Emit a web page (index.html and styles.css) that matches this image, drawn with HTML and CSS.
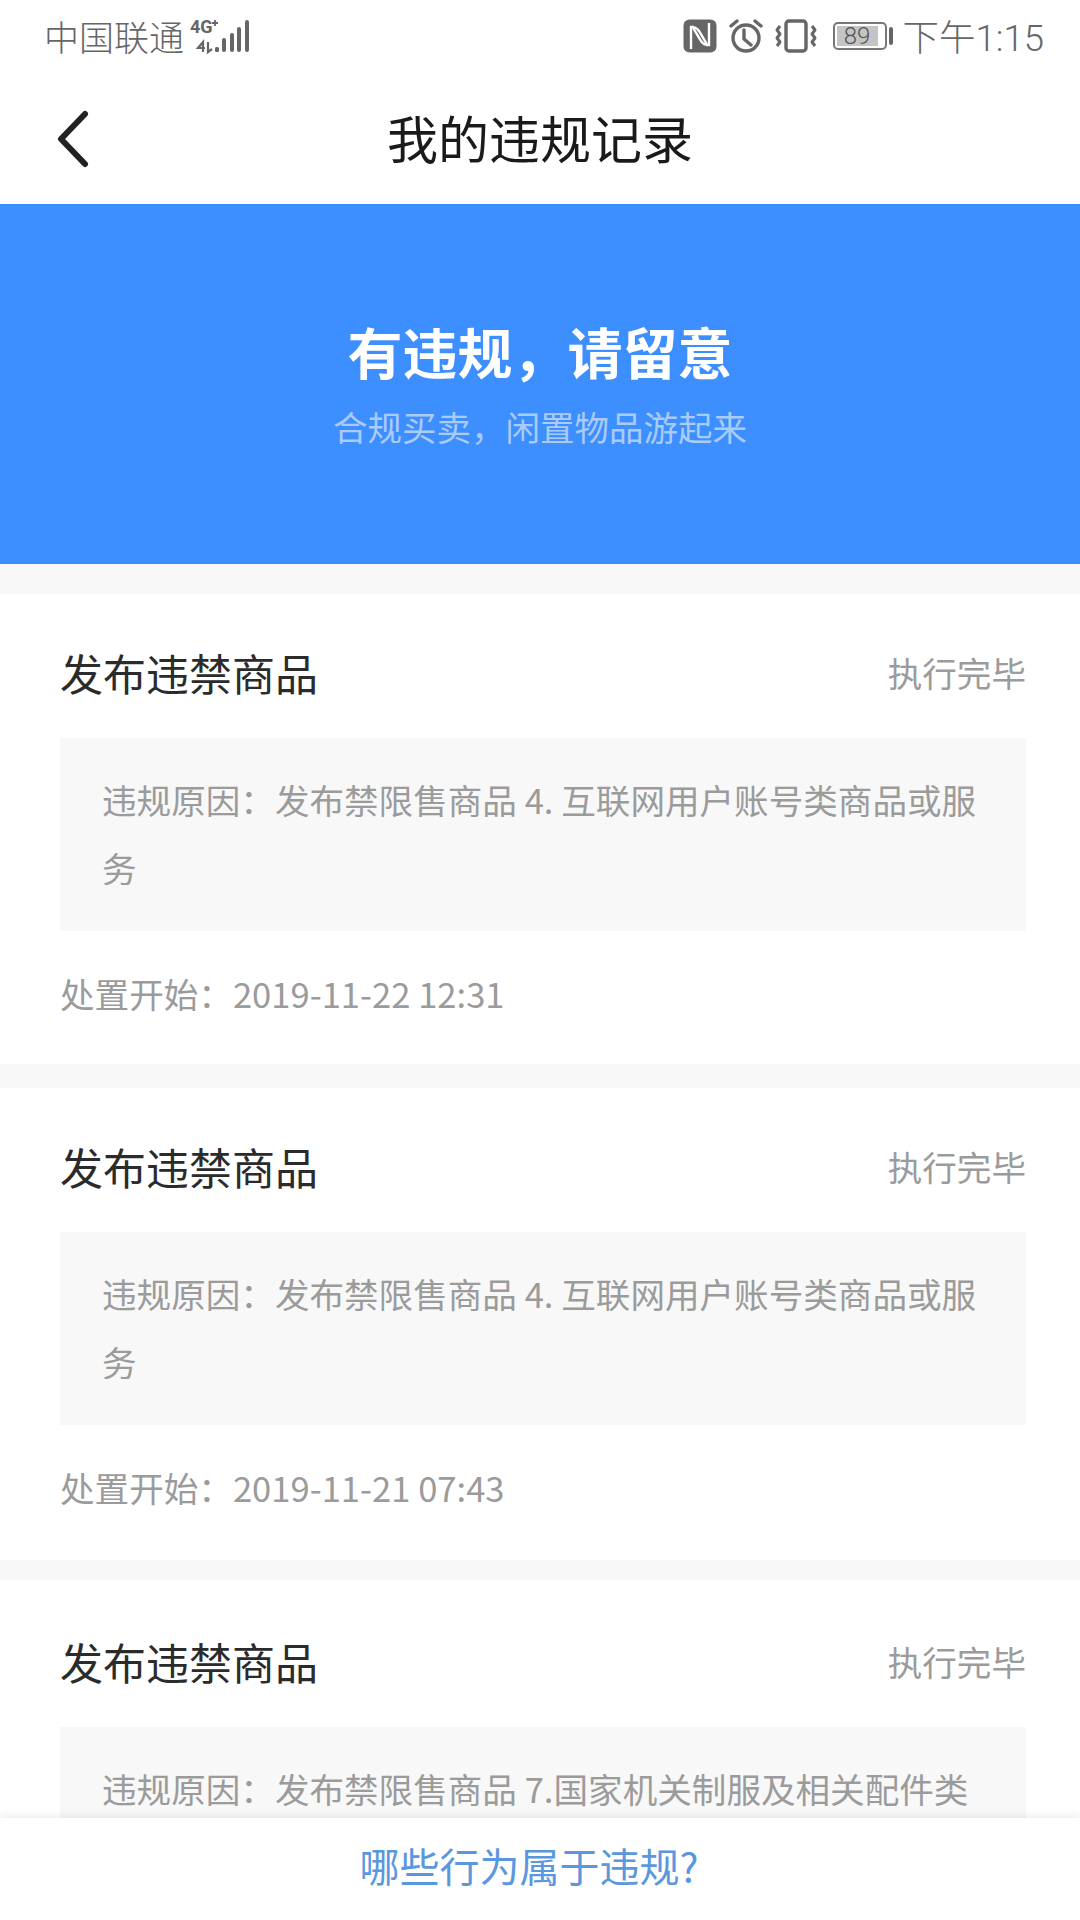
FILE: index.html
```html
<!DOCTYPE html>
<html lang="zh-CN">
<head>
  <meta charset="UTF-8" />
  <meta name="viewport" content="width=device-width, initial-scale=1.0"/>
  <title>我的违规记录</title>
  <link rel="stylesheet" href="styles.css">
</head>
<body>
  <div class="phone">
    <!-- status bar -->
    <div class="status-bar">
      <div class="status-left">
        <span class="carrier">中国联通</span>
        <svg class="signal" width="60" height="42" viewBox="0 -6 60 42">
          <text x="0" y="13" class="net-label">4G</text>
          <path d="M25 0v6M22 3h6" stroke="#666" stroke-width="1.8" fill="none"/>
          <path d="M13 32V22l-5 6h7M18 22v10l4-3" stroke="#666" stroke-width="2.2" fill="none"/>
          <rect x="25" y="27" width="4" height="5" rx="1.5" fill="#666"/>
          <rect x="32" y="18" width="4" height="14" rx="2" fill="#666"/>
          <rect x="40" y="13" width="4" height="19" rx="2" fill="#666"/>
          <rect x="47" y="7" width="4" height="25" rx="2" fill="#666"/>
          <rect x="55" y="0" width="4" height="32" rx="2" fill="#666"/>
        </svg>
      </div>
      <div class="status-right">
        <svg class="status-icon" width="34" height="34" viewBox="0 0 34 34" fill="none">
          <rect x="0.5" y="0.5" width="33" height="33" rx="6" fill="#666"/>
          <path d="M8 30V8c4 0 6 1 8 4l9 15" stroke="#fff" stroke-width="2.4"/>
          <path d="M26 4v22c-4 0-6-1-8-4L9 7" stroke="#fff" stroke-width="2.4"/>
        </svg>
        <svg class="status-icon" width="34" height="34" viewBox="0 0 34 34" fill="none" stroke="#666" stroke-width="3.4" stroke-linecap="round">
          <circle cx="17" cy="19" r="13"/>
          <path d="M15 11v9l7 6M2 7l6-5M32 7l-6-5"/>
        </svg>
        <svg class="status-icon" width="42" height="34" viewBox="0 0 42 34" fill="none" stroke="#666" stroke-linejoin="round">
          <rect x="11" y="2" width="20" height="30" rx="3" stroke-width="3.4"/>
          <path d="M5 7L2 11l3 4-3 4 3 4-3 4" stroke-width="3"/>
          <path d="M37 7l3 4-3 4 3 4-3 4 3 4" stroke-width="3"/>
        </svg>
        <div class="battery">
          <div class="battery-body"><span class="battery-fill">89</span></div>
          <div class="battery-cap"></div>
        </div>
        <span class="clock">下午1:15</span>
      </div>
    </div>

    <!-- title bar -->
    <header class="title-bar">
      <svg class="back" width="32" height="58" viewBox="0 0 32 58">
        <path d="M28 4L4 29l24 25" fill="none" stroke="#222" stroke-width="6" stroke-linecap="round" stroke-linejoin="round"/>
      </svg>
      <h1>我的违规记录</h1>
    </header>

    <section class="banner">
      <h2>有违规，请留意</h2>
      <p>合规买卖，闲置物品游起来</p>
    </section>

    <main class="records">
      <article class="record">
        <div class="record-head">
          <h3>发布违禁商品</h3>
          <span class="record-state">执行完毕</span>
        </div>
        <div class="record-reason">违规原因：发布禁限售商品 4. 互联网用户账号类商品或服务</div>
        <div class="record-date">处置开始：2019-11-22 12:31</div>
      </article>
      <article class="record record-tall">
        <div class="record-head">
          <h3>发布违禁商品</h3>
          <span class="record-state">执行完毕</span>
        </div>
        <div class="record-reason">违规原因：发布禁限售商品 4. 互联网用户账号类商品或服务</div>
        <div class="record-date">处置开始：2019-11-21 07:43</div>
      </article>
      <article class="record record-last">
        <div class="record-head">
          <h3>发布违禁商品</h3>
          <span class="record-state">执行完毕</span>
        </div>
        <div class="record-reason">违规原因：发布禁限售商品 7.国家机关制服及相关配件类</div>
      </article>
    </main>

    <footer class="help-bar">哪些行为属于违规?</footer>
  </div>
</body>
</html>
```

FILE: styles.css
```css
* {
  box-sizing: border-box;
}

html, body {
  margin: 0;
  padding: 0;
}

body {
  background: #f8f8f8;
  font-family: "Noto Sans CJK SC", "Noto Sans", sans-serif;
}

.phone {
  position: relative;
  width: 1080px;
  height: 1920px;
  overflow: hidden;
  background: #f8f8f8;
}

.status-bar {
  display: flex;
  justify-content: space-between;
  align-items: center;
  height: 72px;
  padding: 0 36px 0 44px;
  background: #fff;
  color: #666;
}

.status-left,
.status-right {
  display: flex;
  align-items: center;
}

.status-left {
  gap: 6px;
  padding-bottom: 2px;
}

.carrier {
  font-size: 35px;
  font-weight: 300;
}

.net-label {
  font-family: "Roboto", sans-serif;
  font-size: 18px;
  font-weight: 700;
  fill: #666;
}

.status-icon {
  margin-right: 12px;
}

.battery {
  display: flex;
  align-items: center;
  gap: 2px;
  margin: 0 10px 0 4px;
}

.battery-body {
  width: 54px;
  height: 28px;
  padding: 2px;
  border: 2px solid #777;
  border-radius: 5px;
}

.battery-fill {
  display: block;
  width: 41px;
  height: 20px;
  background: #c4c4c4;
  color: #555;
  font-family: "Roboto", sans-serif;
  font-size: 24px;
  font-weight: 300;
  line-height: 20px;
  text-align: center;
}

.battery-cap {
  width: 4px;
  height: 18px;
  border-radius: 2px;
  background: #666;
}

.clock {
  margin-bottom: 2px;
  font-family: "Roboto", "Noto Sans CJK SC", sans-serif;
  font-size: 36.5px;
  font-weight: 300;
}

.title-bar {
  display: flex;
  align-items: center;
  justify-content: center;
  position: relative;
  height: 132px;
  padding-bottom: 2px;
  background: #fff;
}

.title-bar h1 {
  margin: 0;
  color: #1a1a1a;
  font-size: 51px;
  font-weight: 400;
}

.back {
  position: absolute;
  left: 57px;
  top: 38px;
}

.banner {
  height: 360px;
  padding-top: 110px;
  background: #3d8eff;
  text-align: center;
}

.banner h2 {
  margin: 0;
  color: #fff;
  font-size: 55px;
  font-weight: 700;
  line-height: 72px;
}

.banner p {
  margin: 17px 0 0;
  color: #a9cbf5;
  font-size: 34.5px;
  line-height: 46px;
}

.records {
  display: flex;
  flex-direction: column;
  gap: 24px;
  padding-top: 30px;
}

.record {
  padding: 38px 54px 41px 60px;
  background: #fff;
}

.record-tall {
  padding-bottom: 43px;
}

.record-last {
  margin-top: -4px;
  padding-top: 41px;
}

.record-head {
  display: flex;
  justify-content: space-between;
  align-items: center;
  height: 80px;
}

.record-head h3 {
  margin: 0;
  color: #2b2b2b;
  font-size: 43px;
  font-weight: 400;
}

.record-state {
  color: #9b9b9b;
  font-size: 34.6px;
}

.record-reason {
  margin-top: 26px;
  padding: 27px 30px 30px 42px;
  background: #f8f8f8;
  color: #9b9b9b;
  font-size: 34.6px;
  line-height: 68px;
}

.record-date {
  margin-top: 32px;
  color: #9b9b9b;
  font-size: 34.6px;
  line-height: 60px;
}

.help-bar {
  position: absolute;
  left: 0;
  right: 0;
  bottom: 0;
  height: 102px;
  padding-right: 22px;
  background: #fff;
  box-shadow: 0 -2px 8px rgba(0, 0, 0, 0.08);
  color: #5b97dd;
  font-size: 40px;
  line-height: 94px;
  text-align: center;
}
```
